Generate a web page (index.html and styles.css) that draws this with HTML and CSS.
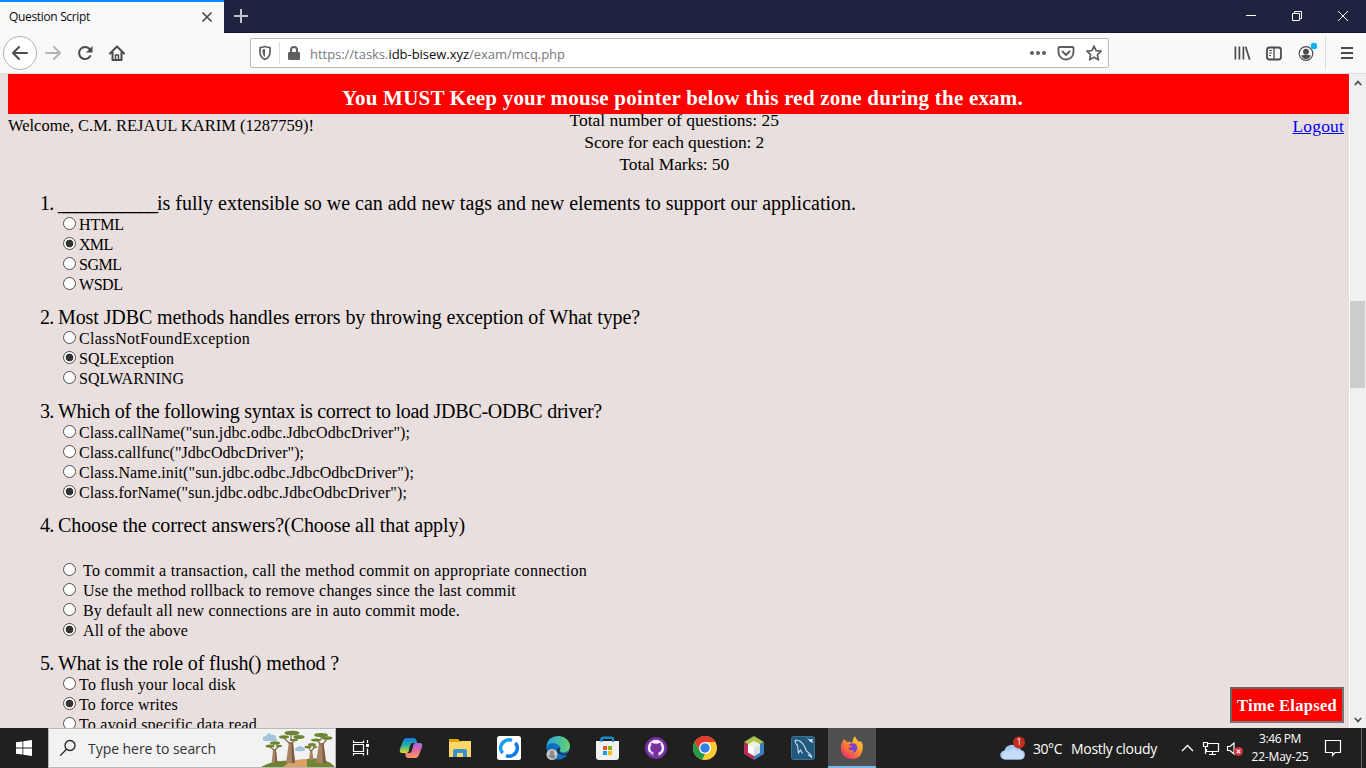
FILE: index.html
```
<!DOCTYPE html>
<html lang="en">
<head>
<meta charset="utf-8">
<title>Question Script</title>
<link rel="stylesheet" href="styles.css">
</head>
<body>
<div class="screen">
  <header class="titlebar">
    <div class="tab"><span class="tab-title" data-w="81">Question Script</span>
      <svg class="tab-close" width="12" height="12" viewBox="0 0 12 12"><path d="M1.500 1.500l9 9M10.500 1.500l-9 9" stroke="#4a4a4f" stroke-width="1.700"/></svg>
    </div>
    <svg class="new-tab" width="16" height="16" viewBox="0 0 16 16"><path d="M8 1v14M1 8h14" stroke="#c3c3cb" stroke-width="2"/></svg>
    <svg class="win-controls" width="110" height="16" viewBox="0 0 110 16" fill="none" stroke="#fff"><path d="M6 7.500h10"/><path d="M52.500 5.500h7v7h-7zM54.500 5.500v-2h7v7h-2"/><path d="M98 3l10 10M108 3l-10 10"/></svg>
  </header>
  <nav class="navbar">
    <div class="back"><svg width="18" height="16" viewBox="0 0 18 16" fill="none" stroke="#4a4a4f" stroke-width="2" stroke-linecap="round" stroke-linejoin="round"><path d="M16 8H2.500M8 2L2 8l6 6"/></svg></div>
    <svg class="fwd" width="18" height="16" viewBox="0 0 18 16" fill="none" stroke="#b5b5b8" stroke-width="2" stroke-linecap="round" stroke-linejoin="round"><path d="M2 8h13.500M10 2l6 6-6 6"/></svg>
    <svg class="reload" width="16" height="16" viewBox="0 0 16 16"><path d="M12.600 4A6 6 0 1 0 13.300 11" fill="none" stroke="#4a4a4f" stroke-width="2" stroke-linecap="round"/><path d="M15.500 1v6.500H9z" fill="#4a4a4f"/></svg>
    <svg class="home" width="16" height="16" viewBox="0 0 16 16" fill="none" stroke="#4a4a4f" stroke-width="2" stroke-linejoin="round" stroke-linecap="round"><path d="M1 8.500l7-7 7 7M3.500 7v8h9V7"/><path d="M6.500 14.500V10h3v4.500" stroke-width="1.500"/></svg>
    <div class="urlbar">
      <svg class="shield" width="14" height="16" viewBox="0 0 14 16"><path d="M2 2.500Q4.500 2.500 7 1.500q2.500 1 5 1V7q0 5-5 7.500Q2 12 2 7z" fill="none" stroke="#5f5f63" stroke-width="1.700" stroke-linejoin="round"/><path d="M7 4v8Q4.500 10.500 4.500 7V4.600z" fill="#5f5f63"/></svg>
      <i class="url-sep"></i>
      <svg class="lock" width="14" height="16" viewBox="0 0 14 16"><rect x="1" y="7" width="12" height="8" rx="1.300" fill="#5f5f63"/><path d="M4 8V5a3 3 0 0 1 6 0v3" fill="none" stroke="#5f5f63" stroke-width="2"/></svg>
      <span class="url" data-w="255">https://tasks.<b>idb-bisew.xyz</b>/exam/mcq.php</span>
      <svg class="url-actions" width="74" height="18" viewBox="0 0 74 18" fill="none" stroke="#5f5f63" stroke-width="1.900" stroke-linejoin="round" stroke-linecap="round"><g fill="#5f5f63" stroke="none"><circle cx="3" cy="9" r="2"/><circle cx="9" cy="9" r="2"/><circle cx="15" cy="9" r="2"/></g><path d="M30.500 3h13q1 0 1 1v4a7.500 7.500 0 0 1-15 0V4q0-1 1-1zM33.500 7.500L37 11l3.500-3.500"/><path d="M65 2l2.100 4.700 5 .5-3.700 3.500 1 5.100L65 13.200l-4.400 2.600 1-5.100-3.700-3.500 5-.5z" stroke-width="1.700"/></svg>
    </div>
    <svg class="tools" width="90" height="24" viewBox="0 0 90 24" fill="none" stroke="#4a4a4f" stroke-width="1.800"><path d="M1.400 5.500v13M5.400 5.500v13M9.400 5.500v13M11.700 5.700l4 13" stroke-width="1.700"/><rect x="33" y="6.500" width="14" height="12" rx="2.500"/><path d="M40 6.500v12" stroke-width="1.300"/><path d="M35 9.500h3M35 12h3M35 14.500h2" stroke-width="1"/><circle cx="72" cy="12.500" r="6.800" stroke-width="1.200"/><circle cx="72" cy="10.700" r="2.900" fill="#4a4a4f" stroke="none"/><path d="M67.200 14.500q4.800-1.300 9.600 0-1.500 3.500-4.800 3.500t-4.800-3.500z" fill="#4a4a4f" stroke="none"/><circle cx="80" cy="5" r="3.200" fill="#00b3f4" stroke="none"/></svg>
    <i class="nav-sep"></i>
    <svg class="menu" width="12" height="14" viewBox="0 0 12 14"><path d="M0 2h12M0 7h12M0 12h12" stroke="#4a4a4f" stroke-width="2"/></svg>
  </nav>

  <div class="viewport">
    <main class="page">
      <div class="banner"><b data-w="681">You MUST Keep your mouse pointer below this red zone during the exam.</b></div>
      <div class="info">
        <span class="welcome"><span data-w="306">Welcome, C.M. REJAUL KARIM (1287759)!</span></span>
        <div class="totals"><p><span data-w="209.500">Total number of questions: 25</span></p><p><span data-w="180">Score for each question: 2</span></p><p><span data-w="109.500">Total Marks: 50</span></p></div>
        <a class="logout" data-w="51.500">Logout</a>
      </div>
      <section class="questions">
        <div class="q"><h2><span class="num">1.</span><span class="blank" data-w="99">___________</span><span data-w="699">is fully extensible so we can add new tags and new elements to support our application.</span></h2>
          <label><i></i><span data-w="45">HTML</span></label>
          <label><i class="on"></i><span data-w="33.500">XML</span></label>
          <label><i></i><span data-w="42.500">SGML</span></label>
          <label><i></i><span data-w="43.500">WSDL</span></label></div>
        <div class="q"><h2><span class="num">2.</span><span data-w="582">Most JDBC methods handles errors by throwing exception of What type?</span></h2>
          <label><i></i><span data-w="171">ClassNotFoundException</span></label>
          <label><i class="on"></i><span data-w="95">SQLException</span></label>
          <label><i></i><span data-w="105">SQLWARNING</span></label></div>
        <div class="q"><h2><span class="num">3.</span><span data-w="544">Which of the following syntax is correct to load JDBC-ODBC driver?</span></h2>
          <label><i></i><span data-w="331">Class.callName("sun.jdbc.odbc.JdbcOdbcDriver");</span></label>
          <label><i></i><span data-w="225">Class.callfunc("JdbcOdbcDriver");</span></label>
          <label><i></i><span data-w="335">Class.Name.init("sun.jdbc.odbc.JdbcOdbcDriver");</span></label>
          <label><i class="on"></i><span data-w="328">Class.forName("sun.jdbc.odbc.JdbcOdbcDriver");</span></label></div>
        <div class="q spaced"><h2><span class="num">4.</span><span data-w="407">Choose the correct answers?(Choose all that apply)</span></h2>
          <label><i></i><span data-w="504">To commit a transaction, call the method commit on appropriate connection</span></label>
          <label><i></i><span data-w="433">Use the method rollback to remove changes since the last commit</span></label>
          <label><i></i><span data-w="377">By default all new connections are in auto commit mode.</span></label>
          <label><i class="on"></i><span data-w="105">All of the above</span></label></div>
        <div class="q"><h2><span class="num">5.</span><span data-w="281">What is the role of flush() method ?</span></h2>
          <label><i></i><span data-w="157">To flush your local disk</span></label>
          <label><i class="on"></i><span data-w="99">To force writes</span></label>
          <label><i></i><span data-w="178">To avoid specific data read</span></label></div>
      </section>
      <div class="elapsed"><b data-w="100">Time Elapsed</b></div>
    </main>
    <aside class="scrollbar">
      <svg width="8" height="6" viewBox="0 0 8 6"><path d="M.8 5L4 1.600 7.200 5" fill="none" stroke="#505050" stroke-width="1.800"/></svg>
      <div class="thumb"></div>
      <svg width="8" height="6" viewBox="0 0 8 6"><path d="M.8 1L4 4.400 7.200 1" fill="none" stroke="#505050" stroke-width="1.800"/></svg>
    </aside>
  </div>

  <footer class="taskbar">
    <div class="start"><svg width="16" height="16" viewBox="0 0 16 16" fill="#fff"><path d="M0 2.300l6.500-.9v6.200H0zM7.300 1.200L16 0v7.600H7.300zM0 8.400h6.500v6.200L0 13.700zM7.300 8.400H16V16l-8.700-1.200z"/></svg></div>
    <div class="search">
      <svg width="18" height="18" viewBox="0 0 18 18" fill="none" stroke="#222" stroke-width="1.300"><circle cx="11" cy="6.500" r="5"/><path d="M7.500 10.200L1.200 16.600"/></svg>
      <span data-w="128">Type here to search</span>
      <svg class="trees" width="74" height="38" viewBox="0 0 74 38">
        <path d="M2 11q-1-4 3-4 2-5 6-1 4-1 4 3 2 3-1 3H4q-2 0-2-1zM34 21q0-3 3-3 2-3 4 0 3 0 3 3-1 2-5 1-4 1-5-1z" fill="#a3c5dc"/>
        <path d="M0 38q16-9 34-5v5z" fill="#6b842f"/><path d="M46 38V30q10-2 19 2 6 2 9 6z" fill="#728630"/><path d="M22 38q8-8 24-8v8z" fill="#dca164"/>
        <g fill="#a88264"><path d="M10.500 34l1.700-14h2.600l1.700 14z"/><path d="M25 34l3-21h4l2 21z"/><path d="M48 31l1.200-10h2l1.200 10z"/><path d="M55 34l3-20h4.500l2.500 20z"/></g>
        <g fill="#795b45"><path d="M14 20h.8l1.700 14h-2z"/><path d="M30.500 14h1.500l2 20h-3z"/><path d="M61 14h1.500L65 34h-3z"/></g>
        <path d="M13 21l-5-4M14 21l4-4M29 15l-6-6M30 15l7-7M30 12V5M50 22l-3-4M50 22l4-4M60 16l-5-6M61 16l5-6M60 11V6" stroke="#8b684e" stroke-width="1.200"/>
        <g fill="#6b842f"><ellipse cx="9" cy="17" rx="4.500" ry="1.600"/><ellipse cx="14" cy="14" rx="5" ry="1.800"/><ellipse cx="18" cy="17" rx="3" ry="1.200"/><ellipse cx="23" cy="8" rx="5" ry="1.700"/><ellipse cx="31" cy="4" rx="7.500" ry="2.300"/><ellipse cx="38" cy="8" rx="5.500" ry="1.900"/><ellipse cx="33" cy="11" rx="4" ry="1.200"/><ellipse cx="47" cy="18" rx="3.500" ry="1.300"/><ellipse cx="51" cy="15.500" rx="4" ry="1.500"/><ellipse cx="54" cy="18" rx="2.500" ry="1"/><ellipse cx="55" cy="11" rx="5" ry="1.600"/><ellipse cx="60" cy="6" rx="7" ry="2"/><ellipse cx="66" cy="9" rx="5.500" ry="1.800"/></g>
      </svg>
    </div>
    <div class="taskview"><svg width="18" height="18" viewBox="0 0 18 18" fill="none" stroke="#fff" stroke-width="1.200"><path d="M1.500 1.500v2h10v-2M1.500 16.500v-2h10v2M1.500 5.500h10v7h-10zM15.500 1v3M15.500 9.500V16"/><path d="M14 5h3v3h-3z" fill="#fff" stroke="none"/></svg></div>
    <div class="apps">
      <div><svg width="24" height="24" viewBox="0 0 24 24"><defs><linearGradient id="cp1" x2="0" y2="1"><stop stop-color="#1578e0"/><stop offset=".5" stop-color="#28b4a0"/><stop offset="1" stop-color="#e6d429"/></linearGradient><linearGradient id="cp2" x2="0" y2="1"><stop stop-color="#a266e8"/><stop offset=".5" stop-color="#e668a0"/><stop offset="1" stop-color="#f59a55"/></linearGradient></defs><path d="M7 2h8q2 0 2.700 3l.5 2h-4q-2 0-3 3l-1 4q-.7 3-3 3H3q-3 0-2-4L4 5q1-3 3-3z" fill="url(#cp1)"/><path d="M17 22H9q-2 0-2.500-3L6 17h4q2 0 3-3l1-4q.7-3 3-3h4q3 0 2 4l-3 8q-1 3-3 3z" fill="url(#cp2)"/><path d="M10 14l1-4q1-3 3-3l-1 7q-.7 3-3 3z" fill="#222"/></svg></div>
      <div><svg width="24" height="24" viewBox="0 0 24 24"><path d="M1 3h9l2 2v4H1z" fill="#e5a50a"/><path d="M1 6h11l1-1h10v16H1z" fill="#ffd767"/><path d="M5 21v-6q0-2 2-2h10q2 0 2 2v6h-4v-4H9v4z" fill="#3990d0"/></svg></div>
      <div><svg width="24" height="24" viewBox="0 0 24 24"><rect width="24" height="24" rx="2.500" fill="#fff"/><g fill="none" stroke-width="3.600"><path d="M5.600 17.200A8.200 8.200 0 0 1 15 4.400" stroke="#149df2"/><path d="M18.400 6.800A8.200 8.200 0 0 1 9 19.600" stroke="#087ce5"/></g></svg></div>
      <div><svg width="24" height="24" viewBox="0 0 24 24"><defs><linearGradient id="eg"><stop stop-color="#25a5e5"/><stop offset="1" stop-color="#65d36a"/></linearGradient></defs><circle cx="12" cy="12" r="11.500" fill="#126dbc"/><path d="M0 11Q2 0 12 0c8 0 12 6 12 10 0 5-4 7-8 6-4-.5-1-2-1.500-4C13 7 4 5 0 11z" fill="url(#eg)"/><path d="M14 12q-3 5 4 6 3 0 5-2l1 2-3 1q-9 0-10-4 1-4 3-3z" fill="#222"/><circle cx="6" cy="18.500" r="5.500" fill="#c7c7c7"/><circle cx="6" cy="16.500" r="2" fill="#888"/><path d="M2.700 21q0-3 3.300-3t3.300 3-6.600 0z" fill="#888"/></svg></div>
      <div><svg width="24" height="24" viewBox="0 0 24 24"><path d="M6.500 7V3q0-1.200 1.200-1.200h9q1.300 0 1.300 1.200v4" fill="none" stroke="#1591cf" stroke-width="2"/><path d="M1 5h23v16q0 3-3 3H4q-3 0-3-3z" fill="#f1f1f1"/><path d="M6.500 6V3q0-1.200 1.200-1.200h9q1.300 0 1.300 1.200v3" fill="none" stroke="#1591cf" stroke-width="2"/><path d="M8 10h4v4H8z" fill="#f25022"/><path d="M13 10h4v4h-4z" fill="#7fba00"/><path d="M8 15h4v4H8z" fill="#00a4ef"/><path d="M13 15h4v4h-4z" fill="#ffb900"/></svg></div>
      <div><svg width="24" height="24" viewBox="0 0 24 24"><circle cx="12" cy="12" r="11" fill="#7730a3"/><circle cx="12" cy="12" r="8.200" fill="#f5effa"/><path d="M9.500 21v-4.500Q6.300 15.800 6.300 12q0-1.500 1-2.700-.3-1.500.2-2.600 1.200 0 2.600 1.100 1.900-.5 3.800 0 1.400-1.100 2.600-1.100.5 1.100.2 2.600 1 1.200 1 2.700 0 3.800-3.200 4.500V21z" fill="#7730a3"/><path d="M9.700 18.300q-2 .4-2.800-.8L6 16.200" fill="none" stroke="#7730a3"/></svg></div>
      <div><svg width="24" height="24" viewBox="0 0 24 24"><circle cx="12" cy="12" r="12" fill="#ffcc33"/><path d="M1.600 6A12 12 0 0 1 22.400 6H12l-5.200 9z" fill="#e33b2e"/><path d="M1.600 6l5.200 9 5.200 3-3 5.600A12 12 0 0 1 1.600 6z" fill="#229a4b"/><path d="M12 24l5.200-9H6.800L10 18z" fill="#ffcc33"/><path d="M6.800 15L12 18l-3 5.600z" fill="#229a4b"/><circle cx="12" cy="12" r="6" fill="#fff"/><circle cx="12" cy="12" r="4.700" fill="#327ee8"/></svg></div>
      <div><svg width="24" height="24" viewBox="0 0 24 24"><path d="M12 0l10 6-10 6L2 6z" fill="#aac34c"/><path d="M2 6l10 6v12L2 18z" fill="#b82e54"/><path d="M22 6l-10 6v12l10-6z" fill="#397dc0"/><path d="M12 5l6 3.500v8L12 20l-6-3.500v-8z" fill="#fff"/><path d="M12 12l6-3.500v8L12 20z" fill="#d7dfe2"/><path d="M12 5l6 3.500-6 3.500-6-3.500z" fill="#edf1dd"/></svg></div>
      <div><svg width="24" height="24" viewBox="0 0 24 24"><rect x=".5" y=".5" width="23" height="23" rx="2" fill="#225a7d" stroke="#3c7193"/><path d="M4 4q5 0 8 4 2 3 3.500 7l4 3.500 1.500 3-4-3M4 4q0 3 2.500 5.500l1 7.500 2-3 2 3.500" fill="none" stroke="#cfe0e9" stroke-width="1.100"/><path d="M16 2l3 1.500L22 3l-1 2 1.500 2-3-1z" fill="#e8f2f7"/></svg></div>
      <div class="active"><svg width="24" height="24" viewBox="0 0 24 24"><defs><linearGradient id="ff" x1="1" x2=".2" y2="1"><stop stop-color="#ffe143"/><stop offset=".45" stop-color="#ff9b28"/><stop offset="1" stop-color="#ef286c"/></linearGradient></defs><path d="M4 3l3 3q3-1 5 1 1-5 3-7 1 4 5 6l1-1q3 5 1 11-2 7-10 7T1 15q-1-6 3-12z" fill="url(#ff)"/><circle cx="12.500" cy="12" r="4.800" fill="#7b42d1"/><path d="M5 8l7 2q-1 2-4 2 1 3 4 2l2 1q-3 3-6 1-3-2-3-8z" fill="#ff7629"/></svg></div>
    </div>
    <div class="weather">
      <svg width="26" height="26" viewBox="0 0 26 26"><path d="M5 24.500a4.500 4.500 0 0 1-.5-9A7.500 7.500 0 0 1 17 12q3 0 4 3a4.800 4.800 0 0 1-1 9.500z" fill="#a8c8f4"/><path d="M2 20q2-6 7-4 4-5 8 0 5-1 7 4-1 4.500-4 4.500H5Q2 24 2 20z" fill="#d0e2fb" opacity=".7"/><circle cx="19" cy="7.500" r="6" fill="#c42b1c"/></svg><span class="badge">1</span>
      <span class="deg" data-w="29">30°C</span><span data-w="86">Mostly cloudy</span>
    </div>
    <svg class="tray" width="64" height="20" viewBox="0 0 64 20" fill="none" stroke="#fff" stroke-width="1.200"><path d="M1 13l5.500-5.500L12 13" stroke-width="1.400"/><path d="M27 5.500h10.500v8H25.500V11M31.500 13.500v3M28 16.500h7M22.500 4.500h4v4h-4zM24.500 9v7"/><path d="M46.500 8.500h2.500l4-3.500v11l-4-3.500h-2.500z"/><circle cx="57.500" cy="13.500" r="4.500" fill="#d92c35" stroke="none"/><path d="M55.700 11.700l3.600 3.600M59.300 11.700l-3.600 3.600"/></svg>
    <div class="clock"><span data-w="42">3:46 PM</span><span data-w="57">22-May-25</span></div>
    <svg class="notice" width="18" height="18" viewBox="0 0 18 18" fill="none" stroke="#fff" stroke-width="1.200"><path d="M1.500 1.500h15v12H11l-2.500 3v-3h-7z"/></svg>
    <i class="peek"></i>
  </footer>
</div>
<script src="fit.js"></script>
</body>
</html>
```
FILE: styles.css
```
* { box-sizing: border-box; }
body { margin: 0; overflow: hidden; }
svg { display: block; flex: none; }
.screen { width: 1366px; height: 768px; display: flex; flex-direction: column; overflow: hidden; font-family: "Segoe UI", "Open Sans", sans-serif; }
[data-w] { white-space: nowrap; }

.titlebar { height: 33px; background: #202340; display: flex; align-items: flex-start; border-bottom: 1px solid #15172e; flex: none; }
.tab { width: 224px; height: 33px; background: #f9f9fa; border-top: 2px solid #0a84ff; display: flex; align-items: center; justify-content: space-between; padding: 0 11px 2px 9px; font-size: 12px; color: #0c0c0d; }
.new-tab { margin: 8px 0 0 9px; }
.win-controls { margin: 8px 16px 0 auto; }

.navbar { height: 41px; flex: none; background: #f9f9fa; border-bottom: 1px solid #dedee0; display: flex; align-items: center; padding-left: 3px; }
.back { width: 34px; height: 34px; border: 1px solid #b1b1b3; border-radius: 50%; background: #fff; display: flex; align-items: center; justify-content: center; }
.fwd { margin-left: 7px; }
.reload { margin-left: 15px; }
.home { margin-left: 16px; }
.urlbar { width: 859px; height: 30px; margin-left: 125px; background: #fff; border: 1px solid #b9b9bb; border-radius: 2px; display: flex; align-items: center; }
.shield { margin-left: 7px; }
.url-sep { width: 1px; height: 22px; background: #dcdcde; margin: 0 7px; }
.url { margin-left: 9px; padding-top: 2px; font-size: 13px; color: #78787d; }
.url b { font-weight: 400; color: #0c0c0d; }
.url-actions { margin: 0 5px 0 auto; }
.tools { margin-left: 125px; }
.nav-sep { width: 1px; height: 34px; background: #dcdcde; margin: 0 15px 0 1px; }

.viewport { flex: 1; min-height: 0; display: flex; }
.page { position: relative; width: 1349px; height: 654px; overflow: hidden; background: #e9dfde; color: #000; font-family: "Palatino Linotype", "Book Antiqua", "Liberation Serif", serif; }
.banner { height: 40px; margin-left: 8px; background: #f00; color: #fff; font-size: 21px; line-height: 24px; padding-top: 12px; text-align: center; }
.banner b { margin-left: 8px; }
.info { height: 77px; display: flex; justify-content: space-between; font-size: 17.500px; line-height: 22px; padding: 0 5px 0 8px; }
.welcome, .logout { line-height: 24px; }
.welcome { width: 306px; font-size: 16.500px; }
.totals { width: 240px; margin-left: 190px; text-align: center; height: 66px; margin-top: -5px; clip-path: inset(5px 0 0); }
.totals p { margin: 0; }
.logout { color: #00e; text-decoration: underline; margin-left: 448px; height: 24px; }
.questions { padding-left: 40px; }
.q { margin-bottom: 10px; }
.q h2 { margin: 0; font-size: 20px; font-weight: 400; line-height: 25px; height: 24px; display: flex; }
.num { width: 18px; flex: none; letter-spacing: -.7px; }
.q label { height: 20px; line-height: 20px; display: flex; padding-left: 23px; font-size: 16px; }
.q label i { width: 13px; height: 13px; border: 1px solid #505050; border-radius: 50%; background: #fff; margin: 2px 3px 0 0; flex: none; }
.q label .on { background: radial-gradient(circle, #333 3.500px, #fff 4.200px); }
.spaced h2 { margin-bottom: 24px; }
.spaced label i { margin-right: 7px; }
.elapsed { position: absolute; right: 5px; bottom: 5px; width: 114px; height: 36px; border: 2px solid; border-color: #666 #777 #777 #666; background: #f00; color: #fff; font-size: 16.500px; line-height: 34px; text-align: center; }
.scrollbar { width: 17px; background: #f0f0f0; border-left: 1px solid #fff; display: flex; flex-direction: column; align-items: center; justify-content: space-between; padding: 6px 1px 5px 0; }
.thumb { width: 15px; height: 87px; background: #cdcdcd; margin-bottom: 115px; }

.taskbar { height: 40px; flex: none; background: #202020; display: flex; align-items: center; color: #fff; }
.start { width: 48px; display: flex; justify-content: center; }
.search { width: 288px; height: 40px; background: #f2f2f2; border: 1px solid #b8b8b8; display: flex; align-items: center; padding-left: 10px; font-size: 14px; color: #333; }
.search span { margin-left: 11px; }
.trees { margin-left: auto; }
.taskview { width: 50px; display: flex; justify-content: center; }
.apps { display: flex; height: 40px; }
.apps div { width: 49px; display: flex; align-items: center; justify-content: center; }
.apps .active { width: 48px; background: #505050; border-bottom: 2px solid #76b9ed; margin-left: 1px; padding-top: 2px; }
.weather { margin-left: 124px; position: relative; display: flex; align-items: center; font-size: 14px; }
.weather svg { margin-right: 7px; }
.badge { position: absolute; left: 13px; top: 0; width: 12px; font-size: 9px; line-height: 14px; text-align: center; }
.deg { margin-right: 9px; }
.tray { margin-left: 24px; }
.clock { width: 58px; margin-left: 6px; display: flex; flex-direction: column; align-items: center; font-size: 12px; line-height: 18px; padding-bottom: 1px; }
.notice { margin-left: 15px; }
.peek { width: 1px; height: 40px; background: #666; margin-left: 19px; }
```
FILE: fit.js
```
// Tracks each label so that its line takes the measure given in data-w.
document.querySelectorAll('[data-w]').forEach(function (el) {
  var range = document.createRange();
  range.selectNodeContents(el);
  var natural = range.getBoundingClientRect().width;
  var gap = (parseFloat(el.dataset.w) - natural) / el.textContent.length;
  el.style.letterSpacing = gap.toFixed(3) + 'px';
});
```
